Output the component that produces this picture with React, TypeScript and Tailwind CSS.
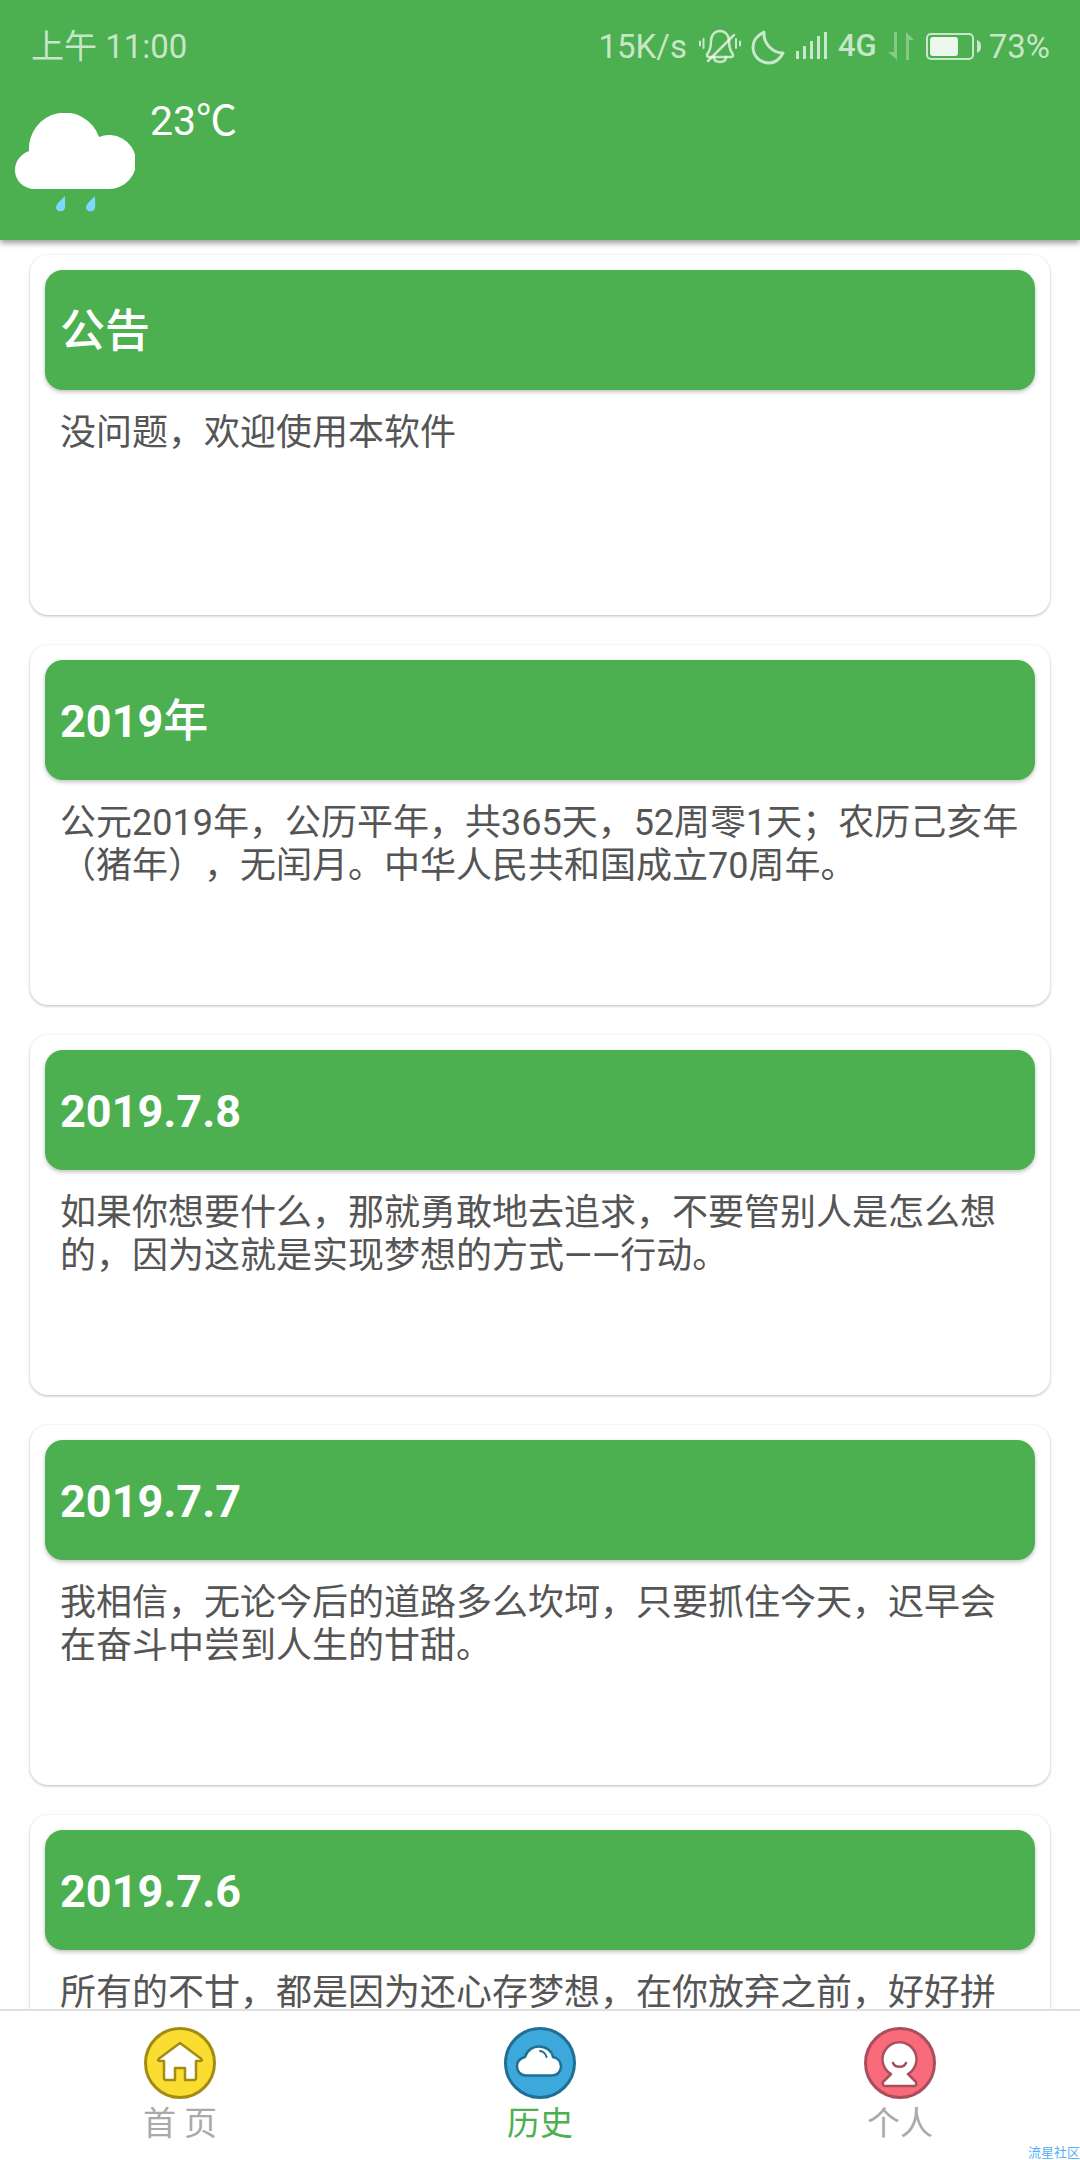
const cards = [
  { title: <span className="font-medium">公告</span>, key: 'notice', body: '没问题，欢迎使用本软件' },
  {
    title: (
      <>
        2019<span className="font-medium">年</span>
      </>
    ),
    key: '2019',
    body: '公元2019年，公历平年，共365天，52周零1天；农历己亥年（猪年），无闰月。中华人民共和国成立70周年。',
  },
  { title: '2019.7.8', key: '0708', body: '如果你想要什么，那就勇敢地去追求，不要管别人是怎么想的，因为这就是实现梦想的方式——行动。' },
  { title: '2019.7.7', key: '0707', body: '我相信，无论今后的道路多么坎坷，只要抓住今天，迟早会在奋斗中尝到人生的甘甜。' },
  { title: '2019.7.6', key: '0706', body: '所有的不甘，都是因为还心存梦想，在你放弃之前，好好拼' },
];

const BellOff = () => (
  <svg width="42" height="36" viewBox="0 0 42 36" fill="none" className="ml-[12px] shrink-0">
    <g stroke="#fff" strokeOpacity="0.7" strokeWidth="2.5" strokeLinecap="round" strokeLinejoin="round">
      <path d="M9 24c2-3 3-6 3-12C12 6 16 2 21 2s9 4 9 10c0 6 1 9 3 12 2 2 1 4-1 4H10c-2 0-3-2-1-4z" />
      <path d="M15 28c0 3 2 5 6 5s6-2 6-5" />
      <path d="M9 32L35 6" />
      <path d="M1 12.5v4M4.5 10v9M37 10v9M41 12.5v4" strokeWidth="2" />
    </g>
  </svg>
);

const Moon = () => (
  <svg width="34" height="36" viewBox="0 0 34 36" fill="none" className="ml-[10px] shrink-0">
    <path
      d="M13 3C5 7 2 13 2 18c0 9 7 16 16 16 6 0 11-4 14-10C22 24 12 15 13 3z"
      stroke="#fff"
      strokeOpacity="0.7"
      strokeWidth="3"
      strokeLinejoin="round"
    />
  </svg>
);

const Signal = () => (
  <svg width="31" height="36" viewBox="0 0 31 36" className="ml-[11px] shrink-0" fill="#fff" fillOpacity="0.7">
    <rect x="0" y="22" width="3" height="8" />
    <rect x="7" y="17" width="3" height="13" />
    <rect x="14" y="12" width="3" height="18" />
    <rect x="21" y="7" width="3" height="23" />
    <rect x="28" y="3" width="3" height="27" />
  </svg>
);

const DataArrows = () => (
  <svg width="26" height="36" viewBox="0 0 26 36" className="ml-[11px] shrink-0" fill="#fff" fillOpacity="0.33">
    <path d="M6 3h3v28L0 23h6z" />
    <path d="M18 31V3l8 8h-5v20z" />
  </svg>
);

const Battery = () => (
  <svg width="55" height="36" viewBox="0 0 55 36" fill="none" className="ml-[12px] shrink-0">
    <rect x="1" y="5" width="46" height="25" rx="4" stroke="#fff" strokeOpacity="0.7" strokeWidth="2" />
    <rect x="4" y="8" width="28" height="19" rx="3" fill="#fff" fillOpacity="0.9" />
    <path d="M51 11c3 1 4 3 4 6.5s-1 5.500-4 6.500z" fill="#fff" fillOpacity="0.7" />
  </svg>
);

const CloudRain = () => (
  <svg width="120" height="102" viewBox="0 0 120 102" className="shrink-0">
    <path d="M20 76C9 76 0 68 0 57 0 48 6 41 14 38A36 36 0 0 1 84 24A27 27 0 1 1 93 76z" fill="#fff" />
    <path d="M50 83c0 5 .5 8 0 12a4.700 4.700 0 0 1-9 0c0-4 5-8 9-12z" fill="#7dd8ff" />
    <path d="M80 83c0 5 .5 8 0 12a4.700 4.700 0 0 1-9 0c0-4 5-8 9-12z" fill="#7dd8ff" />
  </svg>
);

const HomeIcon = () => (
  <svg width="72" height="72" viewBox="0 0 72 72">
    <circle cx="36" cy="36" r="34.500" fill="#fbdd32" stroke="#a28c12" strokeWidth="3" />
    <path
      d="M36 16L14.500 32c-1 1 0 2 1 2H20v17q0 2 2 2h9V41h10v12h9q2 0 2-2V34h4.500c1 0 2-1 1-2z"
      fill="#fff"
      stroke="#a28c12"
      strokeWidth="2.500"
      strokeLinejoin="round"
    />
  </svg>
);

const CloudIcon = () => (
  <svg width="72" height="72" viewBox="0 0 72 72">
    <circle cx="36" cy="36" r="34.500" fill="#3ca8dc" stroke="#206f94" strokeWidth="3" />
    <path
      d="M22 48.500C16 48.500 13 44 13 39.500 13 34 17 31 21 30 23 23 29 19.500 35 19.500 42 19.500 48 24 49 30 54 31 57 35 57 39.500 57 44 54 48.500 48 48.500z"
      fill="#fff"
      stroke="#206f94"
      strokeWidth="2.500"
      strokeLinejoin="round"
    />
    <path d="M36 24c3 0 6 3 6.500 6" fill="none" stroke="#206f94" strokeWidth="2" strokeLinecap="round" />
  </svg>
);

const PersonIcon = () => (
  <svg width="72" height="72" viewBox="0 0 72 72">
    <circle cx="36" cy="36" r="34.500" fill="#f96a7b" stroke="#a94f5c" strokeWidth="3" />
    <path
      d="M27 47A17 17 0 1 1 44 47L52 55q1 4-2 4H21q-3 0-2-4z"
      fill="#fff"
      stroke="#a94f5c"
      strokeWidth="2.500"
      strokeLinejoin="round"
    />
    <path d="M29 36c2 5 11 5 13 0" fill="none" stroke="#a94f5c" strokeWidth="2.500" strokeLinecap="round" />
  </svg>
);

const NavItem = ({ icon, label, active }: { icon: React.ReactNode; label: string; active?: boolean }) => (
  <div className="flex flex-1 flex-col items-center">
    {icon}
    <span className={`mt-[5px] text-[33px] leading-[40px] whitespace-pre ${active ? 'text-[#4caf50]' : 'text-[#aaaaaa]'}`}>
      {label}
    </span>
  </div>
);

export default function App() {
  return (
    <div className="relative flex h-[2160px] w-[1080px] flex-col overflow-hidden bg-white font-['Roboto','Noto_Sans_CJK_SC',sans-serif]">
      {/* header */}
      <div className="z-10 h-[240px] shrink-0 bg-[#4caf50] shadow-[0_3px_6px_rgba(0,0,0,0.4)]">
        <div className="flex h-[92px] items-center justify-between pl-[31px] pr-[30px] pt-[1px] text-[33px] text-white/70">
          <span>上午 11:00</span>
          <div className="flex items-center">
            <span>15K/s</span>
            <BellOff />
            <Moon />
            <Signal />
            <span className="ml-[11px] text-[31px] font-medium">4G</span>
            <DataArrows />
            <Battery />
            <span className="ml-[8px]">73%</span>
          </div>
        </div>
        <div className="mt-[21px] flex items-start pl-[15px]">
          <CloudRain />
          <span className="-mt-[19px] ml-[15px] text-[41px] leading-[46px] text-white">
            23<span className="font-['Noto_Sans_CJK_SC',sans-serif]">℃</span>
          </span>
        </div>
      </div>

      {/* list */}
      <div className="min-h-0 flex-1 overflow-hidden">
        <div className="flex flex-col gap-[30px] px-[30px] pt-[15px]">
          {cards.map((card) => (
            <div
              key={card.key}
              className="h-[360px] shrink-0 rounded-[18px] bg-white p-[15px] shadow-[0_1px_3px_rgba(0,0,0,0.28)]"
            >
              <div className="flex h-[120px] items-center rounded-[18px] bg-[#4caf50] px-[15px] pt-[4px] text-[45px] font-bold text-white shadow-[0_2px_4px_rgba(0,0,0,0.25)]">
                <div>{card.title}</div>
              </div>
              <p className="mt-[22px] px-[15px] text-[36px] leading-[43px] text-[#555555] [text-spacing-trim:space-all]">
                {card.body}
              </p>
            </div>
          ))}
        </div>
      </div>

      {/* bottom nav */}
      <div className="flex h-[151px] shrink-0 border-t-2 border-[#e0e0e0] bg-white pt-[16px]">
        <NavItem icon={<HomeIcon />} label="首 页" />
        <NavItem icon={<CloudIcon />} label="历史" active />
        <NavItem icon={<PersonIcon />} label="个人" />
      </div>

      <span className="absolute bottom-0 right-0 text-[13px] leading-[14px] text-[#55b0f5]">流星社区</span>
    </div>
  );
}
